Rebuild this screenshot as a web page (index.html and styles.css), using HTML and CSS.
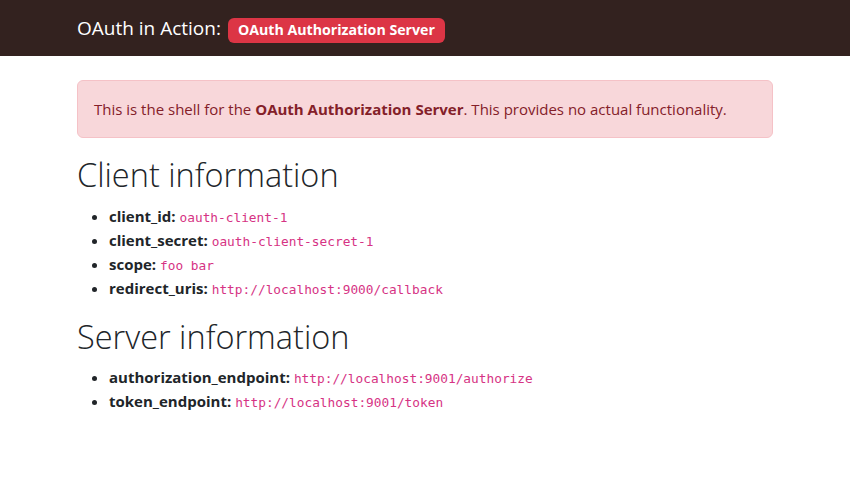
FILE: index.html
```html
<!DOCTYPE html>
<html lang="en">
<head>
<meta charset="utf-8">
<title>OAuth in Action: OAuth Authorization Server</title>
<link rel="stylesheet" href="styles.css">
</head>
<body>
<nav class="navbar">
  <div class="container">
    <span class="brand">OAuth in Action: <span class="badge">OAuth Authorization Server</span></span>
  </div>
</nav>
<main class="container main">
  <div class="alert">This is the shell for the <strong>OAuth Authorization Server</strong>. This provides no actual functionality.</div>
  <h1>Client information</h1>
  <ul>
    <li><b>client_id:</b> <code>oauth-client-1</code></li>
    <li><b>client_secret:</b> <code>oauth-client-secret-1</code></li>
    <li><b>scope:</b> <code>foo bar</code></li>
    <li><b>redirect_uris:</b> <code>http://localhost:9000/callback</code></li>
  </ul>
  <h1>Server information</h1>
  <ul>
    <li><b>authorization_endpoint:</b> <code>http://localhost:9001/authorize</code></li>
    <li><b>token_endpoint:</b> <code>http://localhost:9001/token</code></li>
  </ul>
</main>
</body>
</html>
```
FILE: styles.css
```css
* { box-sizing: border-box; }
body {
  margin: 0;
  font-family: "Open Sans", "Noto Sans", sans-serif;
  font-size: 15px;
  line-height: 24px;
  color: #212529;
  background: #fff;
}
.container {
  width: 100%;
  max-width: 720px;
  margin: 0 auto;
  padding: 0 12px;
}
.navbar {
  background: #33221f;
  padding: 8px 0;
}
.brand {
  display: inline-block;
  padding: 5px 0;
  font-size: 19px;
  line-height: 30px;
  color: #fff;
}
.badge {
  display: inline-block;
  margin-left: 2px;
  padding: 5px 10px 6px;
  font-size: 14.2px;
  font-weight: 700;
  line-height: 14px;
  color: #fff;
  background: #dc3545;
  border-radius: 6px;
  vertical-align: 0;
}
.main { padding-top: 24px; }
.alert {
  padding: 16px;
  margin-bottom: 16px;
  border: 1px solid #f5c2c7;
  border-radius: 6px;
  background: #f8d7da;
  color: #842029;
}
.alert strong { font-weight: 700; }
h1 {
  margin: 0 0 8px;
  font-size: 32.5px;
  font-weight: 300;
  line-height: 41.7px;
}
ul {
  margin: 0 0 16px;
  padding-left: 32px;
}
b { font-weight: 700; }
code {
  font-family: "DejaVu Sans Mono", "Liberation Mono", monospace;
  font-size: 12.8px;
  line-height: 1;
  color: #d63384;
}
```
